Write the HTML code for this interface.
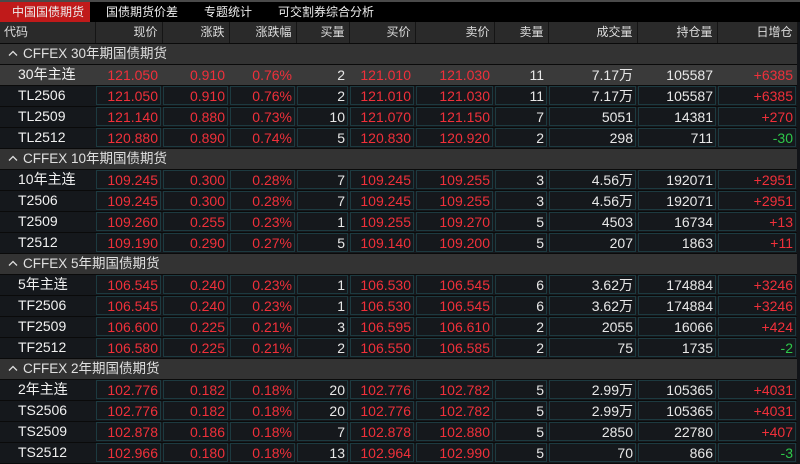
<!DOCTYPE html><html><head><meta charset="utf-8"><style>
*{margin:0;padding:0;box-sizing:border-box}
body{width:800px;height:460px;overflow:hidden;background:#121418;font-family:"Liberation Sans","Noto Sans CJK SC",sans-serif;color:#e8e8e8}
.tabs{height:22px;background:#000;border-top:2px solid #4a4a4a;display:flex;font-size:12px;font-family:"Noto Sans CJK SC",sans-serif}
.tabs div{line-height:20px;height:20px;padding:0 10px;color:#eee;margin-right:6px;overflow:hidden}
.tabs .on{background:#c01a1a;width:90px;padding:0 0 0 12px}
table{border-collapse:collapse;table-layout:fixed;width:797px}
tr{height:21px}
td{height:21px;max-height:21px;line-height:19px;padding:0;font-size:14px;text-align:right;white-space:nowrap;border-bottom:1px solid #0a0a0a;overflow:hidden}
.h td{background:#2a2a2a;color:#ddd;font-size:12px;font-family:"Noto Sans CJK SC",sans-serif;border-right:1px solid #151515;padding-right:4px;line-height:18px}
.h td:first-child{text-align:left;padding-left:4px}
.g td{background:#333;text-align:left;padding-left:8px;font-size:13.5px;color:#e0e0e0;line-height:19px}
.g svg{vertical-align:middle;margin-right:5px;position:relative;top:-1px}
tr.m td{background:#3a3a3a}
tr.d td{background:#15181c}
td i{display:block;font-style:normal;height:19px;line-height:18px;margin:0 1px;border:1px solid #1d3a40;padding-right:2px;overflow:hidden}
tr.m td i{border-color:transparent}
td.n{text-align:left;padding-left:18px;color:#f0f0f0;line-height:19px}
.r{color:#f0303a}.gr{color:#2ec84a}
</style></head><body>
<div class="tabs"><div class="on">中国国债期货</div><div>国债期货价差</div><div>专题统计</div><div>可交割券综合分析</div></div>
<table>
<colgroup><col style="width:95px"><col style="width:67px"><col style="width:67px"><col style="width:67px"><col style="width:53px"><col style="width:66px"><col style="width:79px"><col style="width:54px"><col style="width:89px"><col style="width:80px"><col style="width:80px"></colgroup>
<tr class="h"><td>代码</td><td>现价</td><td>涨跌</td><td>涨跌幅</td><td>买量</td><td>买价</td><td>卖价</td><td>卖量</td><td>成交量</td><td>持仓量</td><td>日增仓</td></tr>
<tr class="g"><td colspan="11"><svg width="10" height="6" viewBox="0 0 10 6"><path d="M1 5.5L5 1.5L9 5.5" fill="none" stroke="#ddd" stroke-width="1.3"/></svg>CFFEX 30年期国债期货</td></tr>
<tr class="m"><td class="n">30年主连</td><td><i class="r">121.050</i></td><td><i class="r">0.910</i></td><td><i class="r">0.76%</i></td><td><i>2</i></td><td><i class="r">121.010</i></td><td><i class="r">121.030</i></td><td><i>11</i></td><td><i>7.17万</i></td><td><i>105587</i></td><td><i class="r">+6385</i></td></tr>
<tr class="d"><td class="n">TL2506</td><td><i class="r">121.050</i></td><td><i class="r">0.910</i></td><td><i class="r">0.76%</i></td><td><i>2</i></td><td><i class="r">121.010</i></td><td><i class="r">121.030</i></td><td><i>11</i></td><td><i>7.17万</i></td><td><i>105587</i></td><td><i class="r">+6385</i></td></tr>
<tr class="d"><td class="n">TL2509</td><td><i class="r">121.140</i></td><td><i class="r">0.880</i></td><td><i class="r">0.73%</i></td><td><i>10</i></td><td><i class="r">121.070</i></td><td><i class="r">121.150</i></td><td><i>7</i></td><td><i>5051</i></td><td><i>14381</i></td><td><i class="r">+270</i></td></tr>
<tr class="d"><td class="n">TL2512</td><td><i class="r">120.880</i></td><td><i class="r">0.890</i></td><td><i class="r">0.74%</i></td><td><i>5</i></td><td><i class="r">120.830</i></td><td><i class="r">120.920</i></td><td><i>2</i></td><td><i>298</i></td><td><i>711</i></td><td><i class="gr">-30</i></td></tr>
<tr class="g"><td colspan="11"><svg width="10" height="6" viewBox="0 0 10 6"><path d="M1 5.5L5 1.5L9 5.5" fill="none" stroke="#ddd" stroke-width="1.3"/></svg>CFFEX 10年期国债期货</td></tr>
<tr class="d"><td class="n">10年主连</td><td><i class="r">109.245</i></td><td><i class="r">0.300</i></td><td><i class="r">0.28%</i></td><td><i>7</i></td><td><i class="r">109.245</i></td><td><i class="r">109.255</i></td><td><i>3</i></td><td><i>4.56万</i></td><td><i>192071</i></td><td><i class="r">+2951</i></td></tr>
<tr class="d"><td class="n">T2506</td><td><i class="r">109.245</i></td><td><i class="r">0.300</i></td><td><i class="r">0.28%</i></td><td><i>7</i></td><td><i class="r">109.245</i></td><td><i class="r">109.255</i></td><td><i>3</i></td><td><i>4.56万</i></td><td><i>192071</i></td><td><i class="r">+2951</i></td></tr>
<tr class="d"><td class="n">T2509</td><td><i class="r">109.260</i></td><td><i class="r">0.255</i></td><td><i class="r">0.23%</i></td><td><i>1</i></td><td><i class="r">109.255</i></td><td><i class="r">109.270</i></td><td><i>5</i></td><td><i>4503</i></td><td><i>16734</i></td><td><i class="r">+13</i></td></tr>
<tr class="d"><td class="n">T2512</td><td><i class="r">109.190</i></td><td><i class="r">0.290</i></td><td><i class="r">0.27%</i></td><td><i>5</i></td><td><i class="r">109.140</i></td><td><i class="r">109.200</i></td><td><i>5</i></td><td><i>207</i></td><td><i>1863</i></td><td><i class="r">+11</i></td></tr>
<tr class="g"><td colspan="11"><svg width="10" height="6" viewBox="0 0 10 6"><path d="M1 5.5L5 1.5L9 5.5" fill="none" stroke="#ddd" stroke-width="1.3"/></svg>CFFEX 5年期国债期货</td></tr>
<tr class="d"><td class="n">5年主连</td><td><i class="r">106.545</i></td><td><i class="r">0.240</i></td><td><i class="r">0.23%</i></td><td><i>1</i></td><td><i class="r">106.530</i></td><td><i class="r">106.545</i></td><td><i>6</i></td><td><i>3.62万</i></td><td><i>174884</i></td><td><i class="r">+3246</i></td></tr>
<tr class="d"><td class="n">TF2506</td><td><i class="r">106.545</i></td><td><i class="r">0.240</i></td><td><i class="r">0.23%</i></td><td><i>1</i></td><td><i class="r">106.530</i></td><td><i class="r">106.545</i></td><td><i>6</i></td><td><i>3.62万</i></td><td><i>174884</i></td><td><i class="r">+3246</i></td></tr>
<tr class="d"><td class="n">TF2509</td><td><i class="r">106.600</i></td><td><i class="r">0.225</i></td><td><i class="r">0.21%</i></td><td><i>3</i></td><td><i class="r">106.595</i></td><td><i class="r">106.610</i></td><td><i>2</i></td><td><i>2055</i></td><td><i>16066</i></td><td><i class="r">+424</i></td></tr>
<tr class="d"><td class="n">TF2512</td><td><i class="r">106.580</i></td><td><i class="r">0.225</i></td><td><i class="r">0.21%</i></td><td><i>2</i></td><td><i class="r">106.550</i></td><td><i class="r">106.585</i></td><td><i>2</i></td><td><i>75</i></td><td><i>1735</i></td><td><i class="gr">-2</i></td></tr>
<tr class="g"><td colspan="11"><svg width="10" height="6" viewBox="0 0 10 6"><path d="M1 5.5L5 1.5L9 5.5" fill="none" stroke="#ddd" stroke-width="1.3"/></svg>CFFEX 2年期国债期货</td></tr>
<tr class="d"><td class="n">2年主连</td><td><i class="r">102.776</i></td><td><i class="r">0.182</i></td><td><i class="r">0.18%</i></td><td><i>20</i></td><td><i class="r">102.776</i></td><td><i class="r">102.782</i></td><td><i>5</i></td><td><i>2.99万</i></td><td><i>105365</i></td><td><i class="r">+4031</i></td></tr>
<tr class="d"><td class="n">TS2506</td><td><i class="r">102.776</i></td><td><i class="r">0.182</i></td><td><i class="r">0.18%</i></td><td><i>20</i></td><td><i class="r">102.776</i></td><td><i class="r">102.782</i></td><td><i>5</i></td><td><i>2.99万</i></td><td><i>105365</i></td><td><i class="r">+4031</i></td></tr>
<tr class="d"><td class="n">TS2509</td><td><i class="r">102.878</i></td><td><i class="r">0.186</i></td><td><i class="r">0.18%</i></td><td><i>7</i></td><td><i class="r">102.878</i></td><td><i class="r">102.880</i></td><td><i>5</i></td><td><i>2850</i></td><td><i>22780</i></td><td><i class="r">+407</i></td></tr>
<tr class="d"><td class="n">TS2512</td><td><i class="r">102.966</i></td><td><i class="r">0.180</i></td><td><i class="r">0.18%</i></td><td><i>13</i></td><td><i class="r">102.964</i></td><td><i class="r">102.990</i></td><td><i>5</i></td><td><i>70</i></td><td><i>866</i></td><td><i class="gr">-3</i></td></tr>
</table>
</body></html>
